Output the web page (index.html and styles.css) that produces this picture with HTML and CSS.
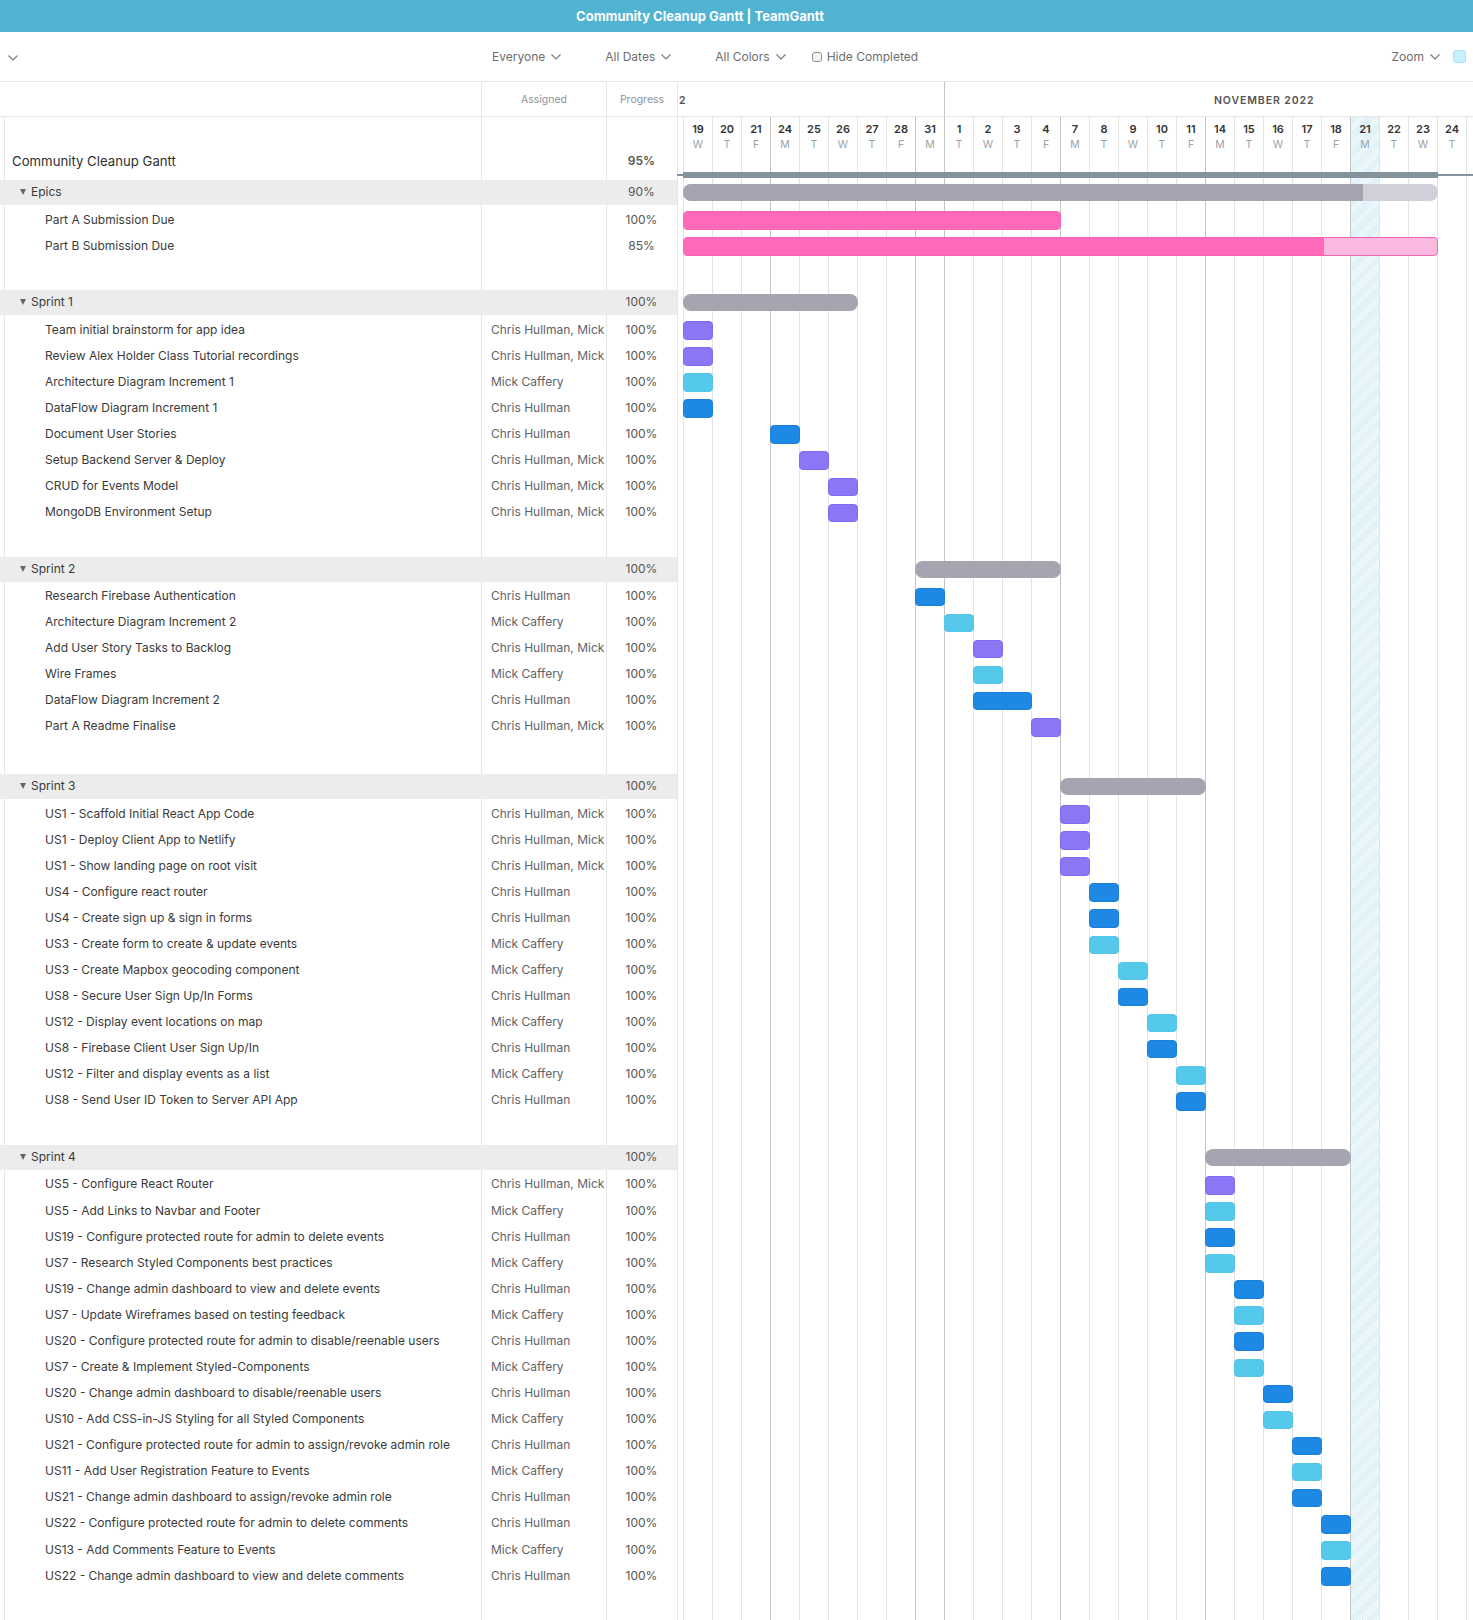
FILE: index.html
```html
<!DOCTYPE html>
<html lang="en">
  <head>
    <meta charset="UTF-8" />
    <meta name="viewport" content="width=device-width, initial-scale=1.0" />
    <title>Community Cleanup Gantt | TeamGantt</title>
    <link rel="stylesheet" href="styles.css">
  </head>
  <body>
    <header class="topbar">Community Cleanup Gantt | TeamGantt</header>

    <nav class="toolbar">
      <svg class="chev chev_first" viewBox="0 0 10 6"><path d="M0.5 0.5 L5 5 L9.5 0.5" /></svg>
      <div class="filters">
        <span class="filter">Everyone <svg class="chev" viewBox="0 0 10 6"><path d="M0.5 0.5 L5 5 L9.5 0.5" /></svg></span>
        <span class="filter">All Dates <svg class="chev" viewBox="0 0 10 6"><path d="M0.5 0.5 L5 5 L9.5 0.5" /></svg></span>
        <span class="filter">All Colors <svg class="chev" viewBox="0 0 10 6"><path d="M0.5 0.5 L5 5 L9.5 0.5" /></svg></span>
        <span class="filter check"><i class="box"></i>Hide Completed</span>
      </div>
      <div class="zoom">
        <span class="filter">Zoom <svg class="chev" viewBox="0 0 10 6"><path d="M0.5 0.5 L5 5 L9.5 0.5" /></svg></span>
        <i class="swatch"></i>
      </div>
    </nav>

    <div class="head">
      <div></div>
      <div class="head_col">Assigned</div>
      <div class="head_col">Progress</div>
      <div class="months">
        <div class="month_old">2</div>
        <div class="month_new">NOVEMBER 2022</div>
      </div>
    </div>

    <main class="chart">
      <div class="days">
        <div class="day"><b>19</b><span>W</span></div>
        <div class="day"><b>20</b><span>T</span></div>
        <div class="day"><b>21</b><span>F</span></div>
        <div class="day monday"><b>24</b><span>M</span></div>
        <div class="day"><b>25</b><span>T</span></div>
        <div class="day"><b>26</b><span>W</span></div>
        <div class="day"><b>27</b><span>T</span></div>
        <div class="day"><b>28</b><span>F</span></div>
        <div class="day monday"><b>31</b><span>M</span></div>
        <div class="day monday"><b>1</b><span>T</span></div>
        <div class="day"><b>2</b><span>W</span></div>
        <div class="day"><b>3</b><span>T</span></div>
        <div class="day"><b>4</b><span>F</span></div>
        <div class="day monday"><b>7</b><span>M</span></div>
        <div class="day"><b>8</b><span>T</span></div>
        <div class="day"><b>9</b><span>W</span></div>
        <div class="day"><b>10</b><span>T</span></div>
        <div class="day"><b>11</b><span>F</span></div>
        <div class="day monday"><b>14</b><span>M</span></div>
        <div class="day"><b>15</b><span>T</span></div>
        <div class="day"><b>16</b><span>W</span></div>
        <div class="day"><b>17</b><span>T</span></div>
        <div class="day"><b>18</b><span>F</span></div>
        <div class="day monday today"><b>21</b><span>M</span></div>
        <div class="day"><b>22</b><span>T</span></div>
        <div class="day"><b>23</b><span>W</span></div>
        <div class="day"><b>24</b><span>T</span></div>
        <div class="day"></div>
      </div>

      <div class="row project">
        <div class="name">Community Cleanup Gantt</div>
        <div class="who"></div>
        <div class="pct">95%</div>
        <div class="track"><div class="projectbar" style="grid-column:1/span 26"></div></div>
      </div>

      <section class="group">
        <div class="row band">
          <div class="name"><i class="arrow"></i>Epics</div><div class="who"></div><div class="pct">90%</div>
          <div class="track"><div class="bar grey" style="grid-column:1/span 26"><div class="fill" style="width:90%"></div></div></div>
        </div>
        <div class="row">
          <div class="name">Part A Submission Due</div><div class="who"></div><div class="pct">100%</div>
          <div class="track"><div class="bar pink" style="grid-column:1/span 13"><div class="fill" style="width:100%"></div></div></div>
        </div>
        <div class="row">
          <div class="name">Part B Submission Due</div><div class="who"></div><div class="pct">85%</div>
          <div class="track"><div class="bar pink" style="grid-column:1/span 26"><div class="fill" style="width:85%"></div></div></div>
        </div>
      </section>

      <section class="group">
        <div class="row band">
          <div class="name"><i class="arrow"></i>Sprint 1</div><div class="who"></div><div class="pct">100%</div>
          <div class="track"><div class="bar grey" style="grid-column:1/span 6"><div class="fill" style="width:100%"></div></div></div>
        </div>
        <div class="row"><div class="name">Team initial brainstorm for app idea</div><div class="who">Chris Hullman, Mick</div><div class="pct">100%</div><div class="track"><div class="bar purple" style="grid-column:1"></div></div></div>
        <div class="row"><div class="name">Review Alex Holder Class Tutorial recordings</div><div class="who">Chris Hullman, Mick</div><div class="pct">100%</div><div class="track"><div class="bar purple" style="grid-column:1"></div></div></div>
        <div class="row"><div class="name">Architecture Diagram Increment 1</div><div class="who">Mick Caffery</div><div class="pct">100%</div><div class="track"><div class="bar cyan" style="grid-column:1"></div></div></div>
        <div class="row"><div class="name">DataFlow Diagram Increment 1</div><div class="who">Chris Hullman</div><div class="pct">100%</div><div class="track"><div class="bar blue" style="grid-column:1"></div></div></div>
        <div class="row"><div class="name">Document User Stories</div><div class="who">Chris Hullman</div><div class="pct">100%</div><div class="track"><div class="bar blue" style="grid-column:4"></div></div></div>
        <div class="row"><div class="name">Setup Backend Server &amp; Deploy</div><div class="who">Chris Hullman, Mick</div><div class="pct">100%</div><div class="track"><div class="bar purple" style="grid-column:5"></div></div></div>
        <div class="row"><div class="name">CRUD for Events Model</div><div class="who">Chris Hullman, Mick</div><div class="pct">100%</div><div class="track"><div class="bar purple" style="grid-column:6"></div></div></div>
        <div class="row"><div class="name">MongoDB Environment Setup</div><div class="who">Chris Hullman, Mick</div><div class="pct">100%</div><div class="track"><div class="bar purple" style="grid-column:6"></div></div></div>
      </section>

      <section class="group wide">
        <div class="row band">
          <div class="name"><i class="arrow"></i>Sprint 2</div><div class="who"></div><div class="pct">100%</div>
          <div class="track"><div class="bar grey" style="grid-column:9/span 5"><div class="fill" style="width:100%"></div></div></div>
        </div>
        <div class="row"><div class="name">Research Firebase Authentication</div><div class="who">Chris Hullman</div><div class="pct">100%</div><div class="track"><div class="bar blue" style="grid-column:9"></div></div></div>
        <div class="row"><div class="name">Architecture Diagram Increment 2</div><div class="who">Mick Caffery</div><div class="pct">100%</div><div class="track"><div class="bar cyan" style="grid-column:10"></div></div></div>
        <div class="row"><div class="name">Add User Story Tasks to Backlog</div><div class="who">Chris Hullman, Mick</div><div class="pct">100%</div><div class="track"><div class="bar purple" style="grid-column:11"></div></div></div>
        <div class="row"><div class="name">Wire Frames</div><div class="who">Mick Caffery</div><div class="pct">100%</div><div class="track"><div class="bar cyan" style="grid-column:11"></div></div></div>
        <div class="row"><div class="name">DataFlow Diagram Increment 2</div><div class="who">Chris Hullman</div><div class="pct">100%</div><div class="track"><div class="bar blue" style="grid-column:11/span 2"></div></div></div>
        <div class="row"><div class="name">Part A Readme Finalise</div><div class="who">Chris Hullman, Mick</div><div class="pct">100%</div><div class="track"><div class="bar purple" style="grid-column:13"></div></div></div>
      </section>

      <section class="group">
        <div class="row band">
          <div class="name"><i class="arrow"></i>Sprint 3</div><div class="who"></div><div class="pct">100%</div>
          <div class="track"><div class="bar grey" style="grid-column:14/span 5"><div class="fill" style="width:100%"></div></div></div>
        </div>
        <div class="row"><div class="name">US1 - Scaffold Initial React App Code</div><div class="who">Chris Hullman, Mick</div><div class="pct">100%</div><div class="track"><div class="bar purple" style="grid-column:14"></div></div></div>
        <div class="row"><div class="name">US1 - Deploy Client App to Netlify</div><div class="who">Chris Hullman, Mick</div><div class="pct">100%</div><div class="track"><div class="bar purple" style="grid-column:14"></div></div></div>
        <div class="row"><div class="name">US1 - Show landing page on root visit</div><div class="who">Chris Hullman, Mick</div><div class="pct">100%</div><div class="track"><div class="bar purple" style="grid-column:14"></div></div></div>
        <div class="row"><div class="name">US4 - Configure react router</div><div class="who">Chris Hullman</div><div class="pct">100%</div><div class="track"><div class="bar blue" style="grid-column:15"></div></div></div>
        <div class="row"><div class="name">US4 - Create sign up &amp; sign in forms</div><div class="who">Chris Hullman</div><div class="pct">100%</div><div class="track"><div class="bar blue" style="grid-column:15"></div></div></div>
        <div class="row"><div class="name">US3 - Create form to create &amp; update events</div><div class="who">Mick Caffery</div><div class="pct">100%</div><div class="track"><div class="bar cyan" style="grid-column:15"></div></div></div>
        <div class="row"><div class="name">US3 - Create Mapbox geocoding component</div><div class="who">Mick Caffery</div><div class="pct">100%</div><div class="track"><div class="bar cyan" style="grid-column:16"></div></div></div>
        <div class="row"><div class="name">US8 - Secure User Sign Up/In Forms</div><div class="who">Chris Hullman</div><div class="pct">100%</div><div class="track"><div class="bar blue" style="grid-column:16"></div></div></div>
        <div class="row"><div class="name">US12 - Display event locations on map</div><div class="who">Mick Caffery</div><div class="pct">100%</div><div class="track"><div class="bar cyan" style="grid-column:17"></div></div></div>
        <div class="row"><div class="name">US8 - Firebase Client User Sign Up/In</div><div class="who">Chris Hullman</div><div class="pct">100%</div><div class="track"><div class="bar blue" style="grid-column:17"></div></div></div>
        <div class="row"><div class="name">US12 - Filter and display events as a list</div><div class="who">Mick Caffery</div><div class="pct">100%</div><div class="track"><div class="bar cyan" style="grid-column:18"></div></div></div>
        <div class="row"><div class="name">US8 - Send User ID Token to Server API App</div><div class="who">Chris Hullman</div><div class="pct">100%</div><div class="track"><div class="bar blue" style="grid-column:18"></div></div></div>
      </section>

      <section class="group">
        <div class="row band">
          <div class="name"><i class="arrow"></i>Sprint 4</div><div class="who"></div><div class="pct">100%</div>
          <div class="track"><div class="bar grey" style="grid-column:19/span 5"><div class="fill" style="width:100%"></div></div></div>
        </div>
        <div class="row"><div class="name">US5 - Configure React Router</div><div class="who">Chris Hullman, Mick</div><div class="pct">100%</div><div class="track"><div class="bar purple" style="grid-column:19"></div></div></div>
        <div class="row"><div class="name">US5 - Add Links to Navbar and Footer</div><div class="who">Mick Caffery</div><div class="pct">100%</div><div class="track"><div class="bar cyan" style="grid-column:19"></div></div></div>
        <div class="row"><div class="name">US19 - Configure protected route for admin to delete events</div><div class="who">Chris Hullman</div><div class="pct">100%</div><div class="track"><div class="bar blue" style="grid-column:19"></div></div></div>
        <div class="row"><div class="name">US7 - Research Styled Components best practices</div><div class="who">Mick Caffery</div><div class="pct">100%</div><div class="track"><div class="bar cyan" style="grid-column:19"></div></div></div>
        <div class="row"><div class="name">US19 - Change admin dashboard to view and delete events</div><div class="who">Chris Hullman</div><div class="pct">100%</div><div class="track"><div class="bar blue" style="grid-column:20"></div></div></div>
        <div class="row"><div class="name">US7 - Update Wireframes based on testing feedback</div><div class="who">Mick Caffery</div><div class="pct">100%</div><div class="track"><div class="bar cyan" style="grid-column:20"></div></div></div>
        <div class="row"><div class="name">US20 - Configure protected route for admin to disable/reenable users</div><div class="who">Chris Hullman</div><div class="pct">100%</div><div class="track"><div class="bar blue" style="grid-column:20"></div></div></div>
        <div class="row"><div class="name">US7 - Create &amp; Implement Styled-Components</div><div class="who">Mick Caffery</div><div class="pct">100%</div><div class="track"><div class="bar cyan" style="grid-column:20"></div></div></div>
        <div class="row"><div class="name">US20 - Change admin dashboard to disable/reenable users</div><div class="who">Chris Hullman</div><div class="pct">100%</div><div class="track"><div class="bar blue" style="grid-column:21"></div></div></div>
        <div class="row"><div class="name">US10 - Add CSS-in-JS Styling for all Styled Components</div><div class="who">Mick Caffery</div><div class="pct">100%</div><div class="track"><div class="bar cyan" style="grid-column:21"></div></div></div>
        <div class="row"><div class="name">US21 - Configure protected route for admin to assign/revoke admin role</div><div class="who">Chris Hullman</div><div class="pct">100%</div><div class="track"><div class="bar blue" style="grid-column:22"></div></div></div>
        <div class="row"><div class="name">US11 - Add User Registration Feature to Events</div><div class="who">Mick Caffery</div><div class="pct">100%</div><div class="track"><div class="bar cyan" style="grid-column:22"></div></div></div>
        <div class="row"><div class="name">US21 - Change admin dashboard to assign/revoke admin role</div><div class="who">Chris Hullman</div><div class="pct">100%</div><div class="track"><div class="bar blue" style="grid-column:22"></div></div></div>
        <div class="row"><div class="name">US22 - Configure protected route for admin to delete comments</div><div class="who">Chris Hullman</div><div class="pct">100%</div><div class="track"><div class="bar blue" style="grid-column:23"></div></div></div>
        <div class="row"><div class="name">US13 - Add Comments Feature to Events</div><div class="who">Mick Caffery</div><div class="pct">100%</div><div class="track"><div class="bar cyan" style="grid-column:23"></div></div></div>
        <div class="row"><div class="name">US22 - Change admin dashboard to view and delete comments</div><div class="who">Chris Hullman</div><div class="pct">100%</div><div class="track"><div class="bar blue" style="grid-column:23"></div></div></div>
      </section>
    </main>
  </body>
</html>
```

FILE: styles.css
```css
* {
  box-sizing: border-box;
}
body {
  margin: 0;
  overflow: hidden;
  font-family: Inter, "Liberation Sans", sans-serif;
  font-size: 12px;
  color: #3a3a3a;
  background-color: white;
}

/*top*/
.topbar {
  height: 32px;
  padding-right: 73px;
  line-height: 33px;
  text-align: center;
  font-size: 13px;
  font-weight: 700;
  color: white;
  background-color: #50b3d2;
}
.toolbar {
  display: flex;
  align-items: center;
  height: 50px;
  padding: 0 7px 0 8px;
  color: #6e6e6e;
  border-bottom: 1px solid #e6e6e6;
}
.chev {
  width: 10px;
  height: 6px;
  margin-top: 1px;
  fill: none;
  stroke: #777;
  stroke-width: 1.1;
}
.chev_first {
  margin-top: 3px;
}
.filters {
  display: flex;
  align-items: center;
  gap: 44px;
  margin-left: 474px;
}
.filter {
  display: flex;
  align-items: center;
  gap: 6px;
}
.check {
  gap: 5px;
  margin-left: -18px;
}
.box {
  width: 10px;
  height: 10px;
  border: 1px solid #8d8d8d;
  border-radius: 3px;
  background-color: #f4f4f4;
}
.zoom {
  display: flex;
  align-items: center;
  gap: 13px;
  margin-left: auto;
}
.swatch {
  width: 13px;
  height: 13px;
  border: 1px solid #a5e3f5;
  border-radius: 3px;
  background-color: #c6f1fd;
}

/*header row*/
.head {
  display: grid;
  grid-template-columns: 481px 125px 71px 1fr;
  height: 35px;
  border-bottom: 1px solid #e6e6e6;
}
.head_col {
  padding-top: 11px;
  font-size: 10.5px;
  text-align: center;
  color: #8c939a;
  border-left: 1px solid #e6e6e6;
}
.months {
  display: flex;
  border-left: 1px solid #e6e6e6;
  font-size: 10.5px;
  font-weight: 600;
  color: #555;
}
.month_old {
  width: 266px;
  padding: 12px 0 0 1px;
}
.month_new {
  flex: 1;
  padding: 12px 0 0 269px;
  letter-spacing: 0.9px;
  white-space: nowrap;
  border-left: 1px solid #c4c4c4;
}

/*chart*/
.chart {
  position: relative;
  height: 1503px;
  background:
    linear-gradient(#e6e6e6, #e6e6e6) 4px 0 / 1px 100% no-repeat,
    linear-gradient(#e6e6e6, #e6e6e6) 481px 0 / 1px 100% no-repeat,
    linear-gradient(#e6e6e6, #e6e6e6) 606px 0 / 1px 100% no-repeat,
    linear-gradient(#e6e6e6, #e6e6e6) 677px 0 / 1px 100% no-repeat;
}
.days {
  position: absolute;
  top: 0;
  bottom: 0;
  left: 683px;
  display: grid;
  grid-template-columns: repeat(28, 29px);
}
.day {
  padding-top: 5px;
  text-align: center;
  border-left: 1px solid #e4e4e4;
}
.day b {
  display: block;
  line-height: 14px;
  font-size: 11px;
  font-weight: 600;
  color: #333;
}
.day span {
  display: block;
  margin-top: 2px;
  line-height: 14px;
  font-size: 10.5px;
  color: #9aa2a8;
}
.monday {
  border-left-color: #c4c4c4;
}
.today {
  background: repeating-linear-gradient(135deg, #d9eef6 0 1px, #f2fafc 1px 2px);
}

.row {
  position: relative;
  display: grid;
  grid-template-columns: 481px 125px 71px 1fr;
  height: 26.08px;
  line-height: 26px;
}
.name {
  padding-left: 45px;
  white-space: nowrap;
}
.who {
  padding-left: 10px;
  white-space: nowrap;
  color: #5f6368;
}
.pct {
  text-align: center;
  color: #555;
}
.track {
  display: grid;
  grid-template-columns: repeat(27, 29px);
  align-content: start;
  padding: 4.5px 0 0 6px;
}

.project {
  height: 63px;
  padding-top: 34px;
  line-height: 20px;
}
.project .name {
  padding-left: 12px;
  font-size: 13.2px;
  color: #2f2f2f;
}
.project .pct {
  font-weight: 600;
}
.project .track {
  padding-top: 21px;
  background: linear-gradient(#84929c, #84929c) 0 23px / 100% 2px no-repeat;
}
.projectbar {
  height: 6px;
  margin-right: -1px;
  background-color: #84929c;
}

.group {
  margin-bottom: 31.4px;
}
.wide {
  margin-bottom: 34.6px;
}
.band {
  height: 25px;
  margin-bottom: 1.5px;
  line-height: 24px;
  background: linear-gradient(#ececec, #ececec) 0 0 / 677px 100% no-repeat;
}
.band .name {
  padding-left: 20px;
}
.band .track {
  padding-top: 4px;
}
.arrow {
  display: inline-block;
  margin-right: 5px;
  vertical-align: 1px;
  border-top: 6px solid #666;
  border-left: 3.5px solid transparent;
  border-right: 3.5px solid transparent;
}

/*bars*/
.bar {
  height: 18.6px;
  margin-right: -1px;
  border-radius: 4px;
  overflow: hidden;
}
.fill {
  height: 100%;
}
.purple {
  background-color: #8d76f6;
  border: 1px solid #8169f4;
}
.cyan {
  background-color: #55c9ec;
  border: 1px solid #52c4e6;
}
.blue {
  background-color: #1e88e5;
  border: 1px solid #1c80d8;
}
.grey {
  height: 17px;
  border-radius: 8px;
  background-color: #d0d0da;
}
.grey .fill {
  background-color: #a5a5b1;
}
.pink {
  background-color: #fbb9df;
  border: 1px solid #fb62b2;
}
.pink .fill {
  background-color: #ff69b9;
}
```
